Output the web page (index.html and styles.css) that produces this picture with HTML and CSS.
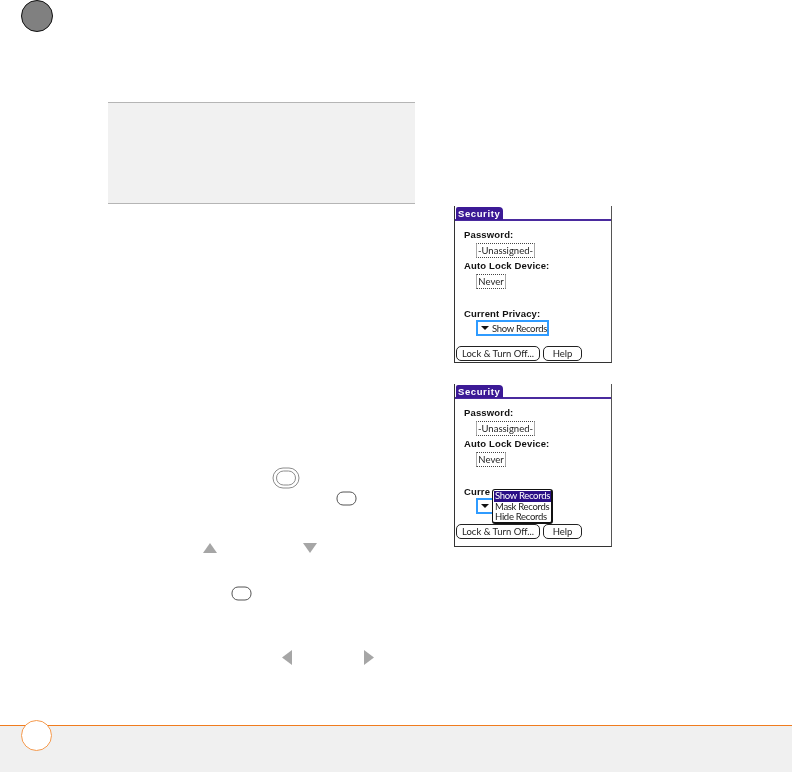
FILE: index.html
```html
<!DOCTYPE html>
<html lang="en">
<head>
  <meta charset="UTF-8">
  <title>Security</title>
  <link rel="stylesheet" href="styles.css">
</head>
<body>
  <div id="chapter-dot"></div>

  <div id="page">
    <div id="text-col">
      <div class="note"></div>

      <div class="key-row row-select">
        <svg width="28" height="22" viewBox="0 0 28 22"><rect x="1" y="1" width="26" height="20" rx="10" class="key"/><rect x="4.5" y="4" width="19" height="14" rx="7" class="key"/></svg>
      </div>
      <div class="key-row row-center">
        <svg width="21" height="15" viewBox="0 0 21 15"><rect x="1" y="1" width="19" height="13" rx="6" class="key dark"/></svg>
      </div>
      <div class="key-row row-arrows">
        <svg width="14" height="10" viewBox="0 0 14 10"><path d="M7 0 L14 10 L0 10 Z" class="arrow"/></svg>
        <svg width="14" height="10" viewBox="0 0 14 10"><path d="M0 0 L14 0 L7 10 Z" class="arrow"/></svg>
      </div>
      <div class="key-row row-center2">
        <svg width="21" height="15" viewBox="0 0 21 15"><rect x="1" y="1" width="19" height="13" rx="6" class="key dark"/></svg>
      </div>
      <div class="key-row row-sides">
        <svg width="10" height="15" viewBox="0 0 10 15"><path d="M10 0 L10 15 L0 7.5 Z" class="arrow"/></svg>
        <svg width="10" height="15" viewBox="0 0 10 15"><path d="M0 0 L10 7.5 L0 15 Z" class="arrow"/></svg>
      </div>
    </div>

    <div id="shots">
      <div class="screen">
        <div class="title-bar"><span class="title-tab">Security</span></div>
        <div class="label first">Password:</div>
        <div class="value unassigned">-Unassigned-</div>
        <div class="label">Auto Lock Device:</div>
        <div class="value never">Never</div>
        <div class="label privacy">Current Privacy:</div>
        <div class="picker"><span class="tri"></span>Show Records</div>
        <div class="buttons">
          <span class="btn btn-lock">Lock &amp; Turn Off...</span>
          <span class="btn btn-help">Help</span>
        </div>
      </div>

      <div class="screen screen-tall">
        <div class="title-bar"><span class="title-tab">Security</span></div>
        <div class="label first">Password:</div>
        <div class="value unassigned">-Unassigned-</div>
        <div class="label">Auto Lock Device:</div>
        <div class="value never">Never</div>
        <div class="label privacy">Curre</div>
        <div class="picker picker-short"><span class="tri"></span></div>
        <div class="popup">
          <div class="popup-item selected">Show Records</div>
          <div class="popup-item">Mask Records</div>
          <div class="popup-item">Hide Records</div>
        </div>
        <div class="buttons">
          <span class="btn btn-lock">Lock &amp; Turn Off...</span>
          <span class="btn btn-help">Help</span>
        </div>
      </div>
    </div>
  </div>

  <div id="footer">
    <div id="page-dot"></div>
  </div>
</body>
</html>
```

FILE: styles.css
```css
* { box-sizing: border-box; }
html, body { margin: 0; height: 100%; }
body { position: relative; width: 792px; height: 772px; overflow: hidden; background: #fff; display: flex; flex-direction: column; font-family: "Liberation Sans", Arial, sans-serif; }

#chapter-dot { position: absolute; left: 21px; top: 0; width: 32px; height: 32px; border-radius: 50%; background: #808080; border: 1px solid #111; }

#page { flex: 1; display: flex; }
#text-col { width: 307px; margin-left: 108px; padding-top: 102px; }
#shots { width: 158px; margin-left: 39px; padding-top: 206px; }

.note { height: 102px; background: #f1f1f1; border-top: 1px solid #b5b5b5; border-bottom: 1px solid #b5b5b5; }

.key-row { display: flex; }
.key-row svg { display: block; }
.key { fill: none; stroke: #8c8c8c; stroke-width: 1; }
.key.dark { stroke: #555; }
.arrow { fill: #a6a6a6; }
.row-select { margin-top: 263px; padding-left: 164px; }
.row-center { margin-top: 2px; padding-left: 228px; }
.row-arrows { margin-top: 37px; padding-left: 95px; gap: 86px; }
.row-center2 { margin-top: 33px; padding-left: 123px; }
.row-sides { margin-top: 49px; padding-left: 174px; gap: 72px; }

/* Device screens */
.screen { position: relative; height: 157px; border: 1px solid #333; border-top: 0; border-right-color: #555; font-family: Lato, "Liberation Sans", sans-serif; font-size: 9.5px; color: #222; margin-bottom: 21px; filter: blur(0.3px); }
.screen-tall { height: 163px; }
.title-bar { height: 15px; padding-top: 1px; border-bottom: 2px solid #4a2a9e; padding-left: 1px; }
.title-tab { display: block; width: 47px; height: 13px; background: #3c1a96; color: #fff; font-family: "Liberation Sans", sans-serif; font-weight: bold; font-size: 9.5px; line-height: 13px; padding-left: 2px; letter-spacing: 0.6px; border-radius: 2px 4px 0 0; }
.label { font-family: "Liberation Sans", sans-serif; font-weight: bold; font-size: 9.5px; line-height: 12px; margin-left: 9px; letter-spacing: 0.15px; color: #111; }
.label.first { margin-top: 8px; }
.label.privacy { margin-top: 19px; }
.value { margin-left: 21px; height: 15px; line-height: 13px; text-align: center; border: 1px dotted #444; border-left: 1px solid #aaa; border-right: 1px solid #aaa; margin-top: 2px; margin-bottom: 2px; }
.unassigned { width: 59px; }
.never { width: 30px; }
.picker { display: flex; align-items: center; margin-left: 21px; width: 73px; height: 16px; border: 2px solid #2f9bff; padding-left: 3px; white-space: nowrap; letter-spacing: -0.3px; }
.picker-short { width: 20px; }
.tri { width: 0; height: 0; border-left: 4px solid transparent; border-right: 4px solid transparent; border-top: 4px solid #111; margin-right: 3px; }
.buttons { display: flex; gap: 3px; margin-left: 1px; margin-top: 10px; }
.btn { display: block; height: 15px; line-height: 13px; text-align: center; border: 1px solid #222; border-radius: 5px; }
.btn-lock { width: 84px; }
.btn-help { width: 39px; }

.popup { position: absolute; left: 37px; top: 105px; width: 61px; height: 35px; background: #fff; border: 1px solid #111; border-right-width: 2px; border-bottom-width: 2px; border-radius: 3px; line-height: 10px; padding: 1px 0 0 1px; color: #222; letter-spacing: -0.3px; }
.popup-item { height: 10.5px; padding-left: 1px; white-space: nowrap; }
.popup-item.selected { background: #2a0f86; color: #fff; }

#footer { position: relative; height: 47px; background: #f0f0f0; border-top: 1px solid #f07c1e; }
#page-dot { position: absolute; left: 21px; top: -6px; width: 31px; height: 31px; border-radius: 50%; background: #fff; border: 1px solid #f59a4d; }
```
